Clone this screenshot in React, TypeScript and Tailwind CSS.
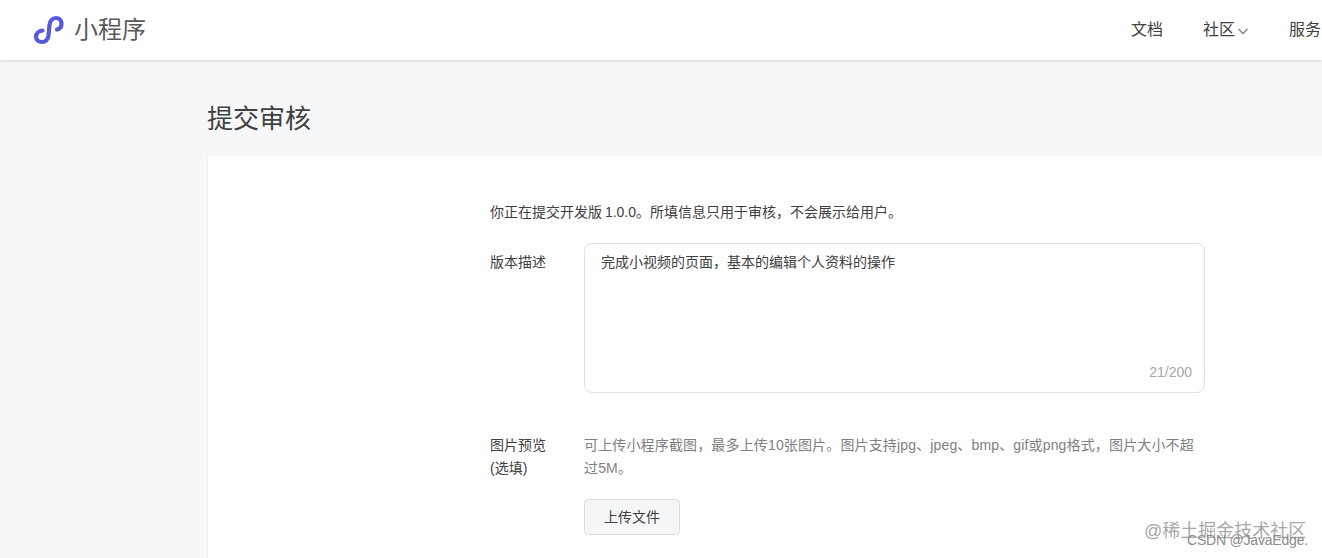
const font = { fontFamily: '"Liberation Sans", "Noto Sans CJK SC", sans-serif' };

function Logo() {
  return (
    <svg width="32" height="30" viewBox="0 0 32 30" fill="none" className="shrink-0">
      <path
        d="M9.5 15.5 C6 16 3 18.3 3 21.5 C3 24.8 5.8 27 8.8 27 C12.8 27 15 24 15.5 20.5 L16.5 10 C16.9 6 19.5 3 23 3 C26.3 3 28.5 5.7 28.5 8.8 C28.5 11.5 26.8 13.8 24 14.5"
        stroke="#5558d9"
        strokeWidth="4.2"
        strokeLinecap="round"
      />
    </svg>
  );
}

function App() {
  return (
    <div style={font} className="relative h-[558px] w-[1322px] overflow-hidden bg-[#f6f7f9] text-[#404040]">
      <header className="flex h-[60px] items-center justify-between bg-white pl-[33px] shadow-[0_1px_3px_rgba(0,0,0,0.14)]">
        <div className="flex items-center gap-[9px]">
          <Logo />
          <span className="text-[24px] leading-[30px] text-[#5a5a5a]">小程序</span>
        </div>
        <nav className="flex w-[191px] shrink-0 items-center text-[16px] leading-[24px] text-[#404040] whitespace-nowrap">
          <span className="w-[72px]">文档</span>
          <span className="flex w-[86px] items-center">
            社区
            <svg width="12" height="12" viewBox="0 0 12 12" fill="none" className="ml-[2px] mt-[1px]">
              <path d="M1.5 4 L6 8.5 L10.5 4" stroke="#808080" strokeWidth="1.3" />
            </svg>
          </span>
          <span className="w-[33px] overflow-hidden">服务</span>
        </nav>
      </header>

      <main className="pl-[207px]">
        <h1 className="h-[96px] pt-[42px] text-[26px] leading-[34px] font-normal text-[#404040]">提交审核</h1>
        <section className="h-[402px] border-l border-[#f0f0f0] bg-white pl-[282px] pt-[46px]">
          <p className="text-[14px] leading-[20px] [word-spacing:-1px]">
            你正在提交开发版 1.0.0。所填信息只用于审核，不会展示给用户。
          </p>

          <div className="mt-[21px] flex">
            <label className="w-[94px] shrink-0 pt-[9px] text-[14px] leading-[20px]">版本描述</label>
            <div className="relative h-[150px] w-[621px] rounded-[8px] border border-[#e0e0e0] px-[16px] pt-[8px] text-[14px] leading-[20px]">
              完成小视频的页面，基本的编辑个人资料的操作
              <span className="absolute bottom-[10px] right-[12px] text-[14px] leading-[20px] text-[#a8a8a8]">21/200</span>
            </div>
          </div>

          <div className="mt-[41px] flex">
            <label className="w-[94px] shrink-0 text-[14px] leading-[23px]">
              图片预览
              <br />
              (选填)
            </label>
            <div className="w-[621px]">
              <p className="w-[612px] text-[14px] leading-[23px] tracking-[0.15px] text-[#808080]">
                可上传小程序截图，最多上传10张图片。图片支持jpg、jpeg、bmp、gif或png格式，图片大小不超过5M。
              </p>
              <button className="mt-[19px] h-[36px] w-[96px] rounded-[4px] border border-[#dcdcdc] bg-[#f5f6f7] text-[14px] text-[#404040]">
                上传文件
              </button>
            </div>
          </div>
        </section>
      </main>

      <span className="absolute left-[1144px] top-[519px] text-[18px] leading-[24px] whitespace-nowrap text-[#a9a9a9]">@稀土掘金技术社区</span>
      <span className="absolute left-[1187px] top-[531px] text-[14px] leading-[18px] tracking-[-0.2px] whitespace-nowrap text-[#8c8c8c]">CSDN @JavaEdge.</span>
    </div>
  );
}

export default App;
